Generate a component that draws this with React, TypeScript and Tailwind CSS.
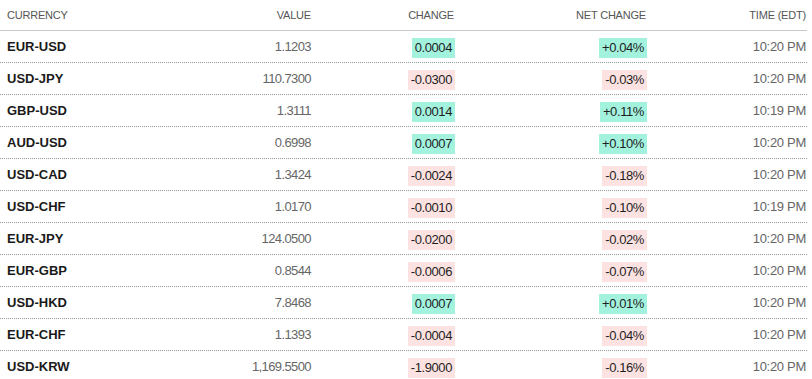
import React from "react";

type Row = { cur: string; value: string; change: string; net: string; time: string };

const rows: Row[] = [
  { cur: "EUR-USD", value: "1.1203", change: "0.0004", net: "+0.04%", time: "10:20 PM" },
  { cur: "USD-JPY", value: "110.7300", change: "-0.0300", net: "-0.03%", time: "10:20 PM" },
  { cur: "GBP-USD", value: "1.3111", change: "0.0014", net: "+0.11%", time: "10:19 PM" },
  { cur: "AUD-USD", value: "0.6998", change: "0.0007", net: "+0.10%", time: "10:20 PM" },
  { cur: "USD-CAD", value: "1.3424", change: "-0.0024", net: "-0.18%", time: "10:20 PM" },
  { cur: "USD-CHF", value: "1.0170", change: "-0.0010", net: "-0.10%", time: "10:19 PM" },
  { cur: "EUR-JPY", value: "124.0500", change: "-0.0200", net: "-0.02%", time: "10:20 PM" },
  { cur: "EUR-GBP", value: "0.8544", change: "-0.0006", net: "-0.07%", time: "10:20 PM" },
  { cur: "USD-HKD", value: "7.8468", change: "0.0007", net: "+0.01%", time: "10:20 PM" },
  { cur: "EUR-CHF", value: "1.1393", change: "-0.0004", net: "-0.04%", time: "10:20 PM" },
  { cur: "USD-KRW", value: "1,169.5500", change: "-1.9000", net: "-0.16%", time: "10:20 PM" },
];

function Badge({ text }: { text: string }) {
  const neg = text.startsWith("-");
  return (
    <span
      className={
        "inline-block h-[20px] px-[3px] leading-[20px] text-[13px] tracking-[-0.4px] text-[#1e1e1e] " +
        (neg ? "bg-[#fde2e2]" : "bg-[#a3f2de]")
      }
    >
      {text}
    </span>
  );
}

export default function App() {
  return (
    <div
      className="w-[807px] bg-white"
      style={{ fontFamily: '"Liberation Sans", Arial, sans-serif' }}
    >
      <div className="grid h-[31px] grid-cols-[160px_151px_144px_192px_160px] items-center border-b border-[#c8c8c8] text-[11px] tracking-[-0.2px] text-[#555]">
        <div className="pl-[7px]">CURRENCY</div>
        <div className="text-right">VALUE</div>
        <div className="text-right pr-px">CHANGE</div>
        <div className="text-right pr-px">NET CHANGE</div>
        <div className="text-right pr-px">TIME (EDT)</div>
      </div>
      {rows.map((r, i) => (
        <div
          key={r.cur}
          className={
            "grid h-[32px] grid-cols-[160px_151px_144px_192px_160px] items-center " +
            (i < rows.length - 1 ? "border-b border-dotted border-[#9a9a9a]" : "")
          }
        >
          <div className="pl-[7px] text-[13px] font-bold text-[#1a1a1a]">{r.cur}</div>
          <div className="text-right text-[13px] tracking-[-0.6px] text-[#666]">{r.value}</div>
          <div className="text-right">
            <Badge text={r.change} />
          </div>
          <div className="text-right">
            <Badge text={r.net} />
          </div>
          <div className="text-right pr-px text-[13px] tracking-[-0.3px] text-[#666]">{r.time}</div>
        </div>
      ))}
    </div>
  );
}
